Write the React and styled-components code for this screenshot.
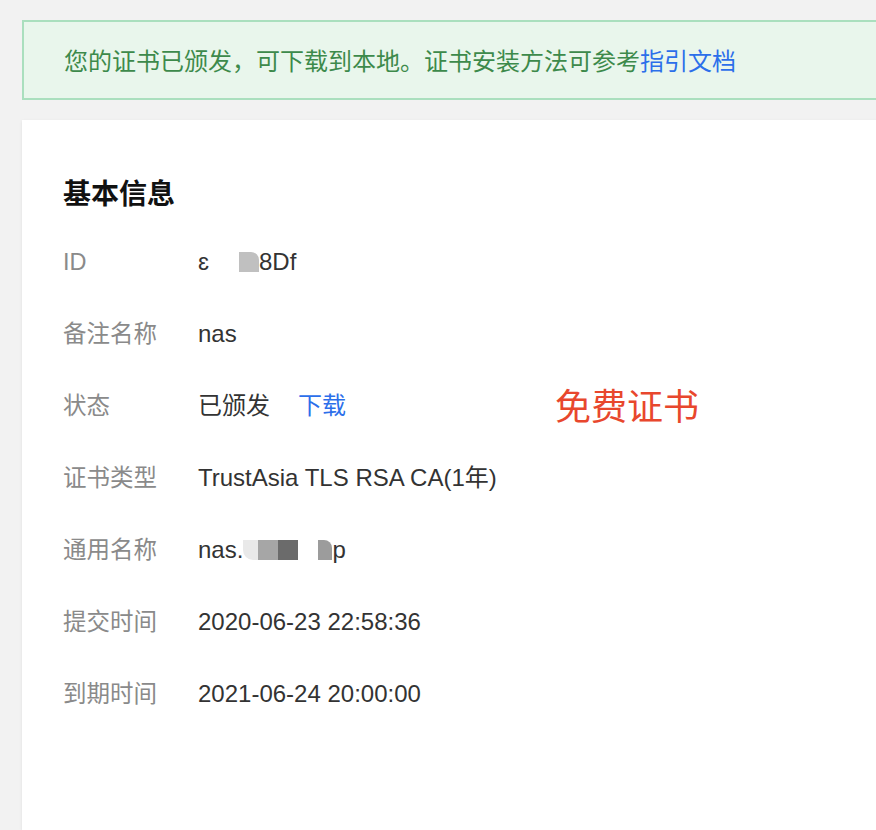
import React from 'react';
import styled, { createGlobalStyle } from 'styled-components';

const GlobalStyle = createGlobalStyle`
    html, body {
        margin: 0;
        padding: 0;
        background: #f2f2f2;
        overflow: hidden;
    }
    body {
        font-family: "Liberation Sans", "Noto Sans CJK SC", sans-serif;
        -webkit-font-smoothing: antialiased;
    }
`;

const rows = [
    { label: 'ID', value: 'id' },
    { label: '备注名称', value: 'nas' },
    { label: '状态', value: 'status' },
    { label: '证书类型', value: 'TrustAsia TLS RSA CA(1年)' },
    { label: '通用名称', value: 'cn' },
    { label: '提交时间', value: '2020-06-23 22:58:36' },
    { label: '到期时间', value: '2021-06-24 20:00:00' },
];

const renderValue = value => {
    if (value === 'id') {
        return (
            <>
                <span>ɛ</span>
                <StyledGap width={30} />
                <StyledMask color="#c0c0c0" width={20} corner="0 8px 0 0" />
                <span>8Df</span>
            </>
        );
    }
    if (value === 'status') {
        return (
            <>
                <span>已颁发</span>
                <StyledLink>下载</StyledLink>
            </>
        );
    }
    if (value === 'cn') {
        return (
            <>
                <span>nas.</span>
                <StyledMask color="#e9e9e9" width={15} corner="0 0 0 10px" />
                <StyledMask color="#a6a6a6" width={20} />
                <StyledMask color="#6b6b6b" width={20} />
                <StyledGap width={20} />
                <StyledMask color="#9c9c9c" width={14} corner="0 8px 0 0" />
                <span>p</span>
            </>
        );
    }
    return value;
};

const App = () => {
    return (
        <StyledPage>
            <GlobalStyle />
            <StyledAlert>
                您的证书已颁发，可下载到本地。证书安装方法可参考<StyledAlertLink>指引文档</StyledAlertLink>
            </StyledAlert>
            <StyledCard>
                <StyledTitle>基本信息</StyledTitle>
                {rows.map(row => (
                    <StyledRow key={row.label}>
                        <StyledLabel>{row.label}</StyledLabel>
                        <StyledValue>{renderValue(row.value)}</StyledValue>
                    </StyledRow>
                ))}
                <StyledStamp>免费证书</StyledStamp>
            </StyledCard>
        </StyledPage>
    );
};

export default App;

const StyledPage = styled.div`
    width: 900px;
    height: 830px;
    padding: 20px 0 0 22px;
    box-sizing: border-box;
    display: flex;
    flex-direction: column;
    gap: 20px;
`;

const StyledAlert = styled.div`
    height: 80px;
    box-sizing: border-box;
    border: 2px solid #aadfbe;
    background-color: #e9f6ec;
    display: flex;
    align-items: center;
    padding-left: 40px;
    font-size: 24px;
    color: #3d8a4b;
    font-family: "Noto Sans CJK SC", sans-serif;
    line-height: 1;
`;

const StyledAlertLink = styled.span`
    color: #2c6fea;
`;

const StyledCard = styled.div`
    position: relative;
    flex: 1;
    background-color: #fff;
    box-shadow: 0 1px 3px rgba(0, 0, 0, 0.08);
    padding: 52px 41px 0;
`;

const StyledTitle = styled.div`
    font-family: "Noto Sans CJK SC", sans-serif;
    font-size: 28px;
    font-weight: 700;
    line-height: 40px;
    color: #111;
    margin-bottom: 14px;
`;

const StyledRow = styled.div`
    display: grid;
    grid-template-columns: 135px 1fr;
    align-items: center;
    height: 72px;
`;

const StyledLabel = styled.div`
    font-family: "Liberation Sans", "Noto Sans CJK SC", sans-serif;
    font-size: 23.5px;
    color: #8a8a8a;
    line-height: 30px;
`;

const StyledValue = styled.div`
    display: flex;
    align-items: center;
    font-size: 24px;
    color: #333;
    line-height: 30px;
    white-space: nowrap;
`;

const StyledLink = styled.span`
    color: #2c6fea;
    margin-left: 28px;
`;

const StyledMask = styled.span`
    display: inline-block;
    width: ${props => props.width}px;
    height: 20px;
    background-color: ${props => props.color};
    border-radius: ${props => props.corner || '0'};
`;

const StyledGap = styled.span`
    display: inline-block;
    width: ${props => props.width}px;
`;

const StyledStamp = styled.div`
    position: absolute;
    left: 533px;
    top: 262px;
    font-family: "Noto Sans CJK SC", sans-serif;
    font-size: 36px;
    line-height: 44px;
    color: #e8472d;
`;
